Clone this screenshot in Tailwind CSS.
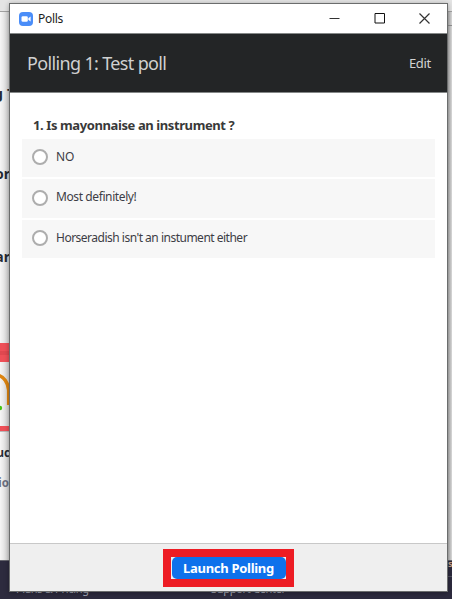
<!DOCTYPE html>
<html lang="en">
<head>
<meta charset="utf-8">
<title>Polls</title>
<script src="https://cdn.jsdelivr.net/npm/@tailwindcss/browser@4"></script>
</head>
<body class="overflow-hidden">
<div class="relative h-[599px] w-[452px] overflow-hidden bg-[#ededed] font-['Noto_Sans','Open_Sans',sans-serif] whitespace-nowrap">
  <!-- Browser page behind the dialog -->
  <div class="flex h-full flex-col">
    <div class="h-3 border-b border-[#a0a0a0] bg-[#e4e4e4]"></div>
    <div class="flex flex-1 justify-between">
      <div class="relative w-[10px] overflow-hidden bg-linear-to-r from-[#f6f6f6] to-[#cfcfcf] font-bold text-[#252a33]">
        <span class="absolute right-[7px] top-[71px] text-[15px] leading-5">g</span>
        <span class="absolute left-[7px] top-[71px] text-[15px] leading-5">T</span>
        <span class="absolute right-0 top-[152px] text-[14px] leading-5">or</span>
        <span class="absolute right-0 top-[235px] text-[14px] leading-5">ar</span>
        <svg class="absolute left-0 top-[331px]" width="10" height="90" viewBox="0 0 10 90">
          <rect width="10" height="19" fill="#ee5058"/><rect y="8" width="10" height="4" fill="#e04850"/>
          <path d="M-3 32C4 33 8 40 8.700 47V62" fill="none" stroke="#dc8410" stroke-width="3.500"/>
          <circle cx="0" cy="65" r="2.200" fill="#45c414"/>
          <rect y="83" width="10" height="5" fill="#ee5058"/><rect y="88" width="10" height="1" fill="#b8b8b8"/>
        </svg>
        <span class="absolute right-0 top-[431px] text-[11.500px] leading-5">uc</span>
        <span class="absolute right-[1px] top-[461px] text-[11.500px] leading-5 text-[#6b7080]">io</span>
      </div>
      <div class="w-[5px] bg-linear-to-r from-[#a8a8a8] to-[#dcdcdc]"><div class="mt-[13px] h-px bg-[#909090]"></div></div>
    </div>
    <div class="relative h-[39px] border-t border-[#64646c] bg-[#2d2b3e] text-[11px] leading-4 tracking-[-0.3px] text-[#a9adba]">
      <span class="absolute left-4 top-[20px]">Plans &amp; Pricing</span>
      <span class="absolute left-[211px] top-[20px]">Support Center</span>
      <span class="absolute left-[448px] top-[-5px] text-[9px] font-bold text-[#c9a48a]">s</span>
      <span class="absolute left-[448px] top-[15px] h-px w-1 bg-[#50505e]"></span>
    </div>
  </div>

  <!-- Polls dialog -->
  <div class="absolute left-[9px] top-[3px] flex h-[589px] w-[439px] flex-col border border-[#6b6d6d] bg-white shadow-[0_1px_5px_#00000055]">
    <div class="flex h-[29px] items-center bg-white pl-[9px] text-[12px] text-[#1c1c1c]">
      <svg width="14" height="14" viewBox="0 0 14 14">
        <rect width="14" height="14" rx="4" fill="#4a8df8"/>
        <rect x="2.500" y="4.300" width="6.300" height="5.400" rx="1.300" fill="#fff"/>
        <path d="M9.300 6.200 11.600 4.600V9.400L9.300 7.800Z" fill="#fff"/>
      </svg>
      <span class="ml-[5px] text-[12px] tracking-[-0.3px]">Polls</span>
      <div class="ml-auto mr-[17px] flex items-center gap-[34px]">
        <svg width="11" height="11" viewBox="0 0 11 11"><path d="M.5 5.500H10.500" stroke="#333"/></svg>
        <svg width="11" height="11" viewBox="0 0 11 11"><path d="M1 .5H10.500V10H1Z" fill="none" stroke="#111"/></svg>
        <svg width="11" height="11" viewBox="0 0 11 11"><path d="M.5.5 10.500 10.500M10.500.5.5 10.500" stroke="#333" stroke-width="1.200"/></svg>
      </div>
    </div>
    <div class="flex h-[60px] items-center justify-between border-y border-y-[#858888] bg-[#232526] pl-[17px] pr-[16px]">
      <span class="text-[18px] tracking-[-0.65px] text-[#d0d0d0]">Polling 1: Test poll</span>
      <span class="relative top-px text-[13px] tracking-[-0.3px] text-[#d2d2d2]">Edit</span>
    </div>
    <div class="flex-1 pl-3 pr-[12px] pt-[22px] text-[#393939]">
      <h1 class="h-[24px] pl-[11px] text-[13px] font-bold leading-5 tracking-[-0.4px]">1. Is mayonnaise an instrument ?</h1>
      <div class="flex flex-col gap-[2px] text-[12px] text-[#3d3d45]">
        <label class="flex h-[38px] items-center gap-2 bg-[#f7f7f7] pl-[10px]"><span class="relative -top-px size-4 rounded-full border-2 border-[#adadad] bg-white"></span><span class="relative -top-px tracking-[-0.2px]">NO</span></label>
        <label class="flex h-[39px] items-center gap-2 bg-[#f7f7f7] pl-[10px]"><span class="relative -top-px size-4 rounded-full border-2 border-[#adadad] bg-white"></span><span class="relative -top-[2px] tracking-[-0.4px]">Most definitely!</span></label>
        <label class="flex h-[38px] items-center gap-2 bg-[#f7f7f7] pl-[10px]"><span class="relative -top-px size-4 rounded-full border-2 border-[#adadad] bg-white"></span><span class="relative -top-px tracking-[-0.5px]">Horseradish isn't an instument either</span></label>
      </div>
    </div>
    <div class="flex h-[48px] justify-center border-t border-[#c8c8c8] bg-[#efefef] pt-[5px]">
      <div class="flex h-[38px] w-[131px] items-center justify-center bg-[#ed1c24]">
        <div class="flex h-[22px] w-[115px] items-center justify-center bg-[#eaf0f5]">
          <button class="h-[22px] w-[114px] rounded-[5px] bg-[#0e71eb] text-[13px] font-bold leading-5 tracking-[-0.3px] text-white">Launch Polling</button>
        </div>
      </div>
    </div>
  </div>
</div>
</body>
</html>
